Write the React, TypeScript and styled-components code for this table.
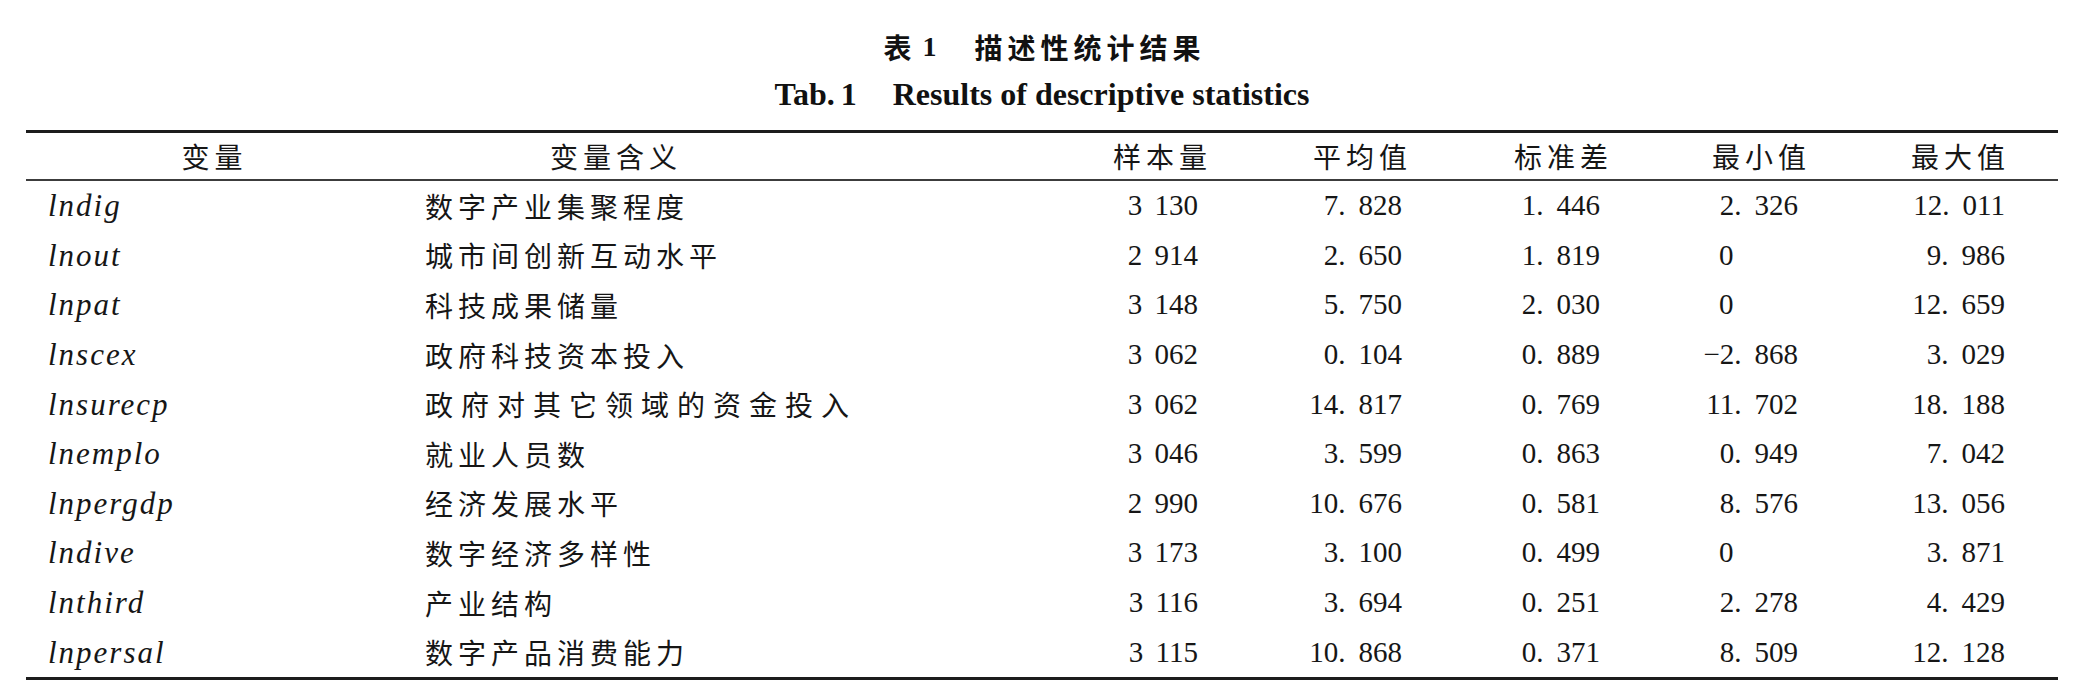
import styled, {createGlobalStyle} from 'styled-components';

interface StatRow {
    name: string;
    meaning: string;
    spacing?: number;
    values: string[];
}

const ROWS: StatRow[] = [
    {name: 'lndig', meaning: '数字产业集聚程度', values: ['3 130', '7.828', '1.446', '2.326', '12.011']},
    {name: 'lnout', meaning: '城市间创新互动水平', values: ['2 914', '2.650', '1.819', '0', '9.986']},
    {name: 'lnpat', meaning: '科技成果储量', values: ['3 148', '5.750', '2.030', '0', '12.659']},
    {name: 'lnscex', meaning: '政府科技资本投入', values: ['3 062', '0.104', '0.889', '−2.868', '3.029']},
    {name: 'lnsurecp', meaning: '政府对其它领域的资金投入', spacing: 8, values: ['3 062', '14.817', '0.769', '11.702', '18.188']},
    {name: 'lnemplo', meaning: '就业人员数', values: ['3 046', '3.599', '0.863', '0.949', '7.042']},
    {name: 'lnpergdp', meaning: '经济发展水平', values: ['2 990', '10.676', '0.581', '8.576', '13.056']},
    {name: 'lndive', meaning: '数字经济多样性', values: ['3 173', '3.100', '0.499', '0', '3.871']},
    {name: 'lnthird', meaning: '产业结构', values: ['3 116', '3.694', '0.251', '2.278', '4.429']},
    {name: 'lnpersal', meaning: '数字产品消费能力', values: ['3 115', '10.868', '0.371', '8.509', '12.128']},
];

const STAT_HEADS = ['样本量', '平均值', '标准差', '最小值', '最大值'];

const COLS = '372px 664px 196px 204px 198px 198px 200px';

// decimals are set with a wide point, as in the printed table
const renderNumber = (value: string) => {
    if (value === '0') return <Zero>0</Zero>;
    if (!value.includes('.')) return value;
    const [int, frac] = value.split('.');
    return (
        <>
            {int}
            <Dot>.</Dot>
            {frac}
        </>
    );
};

const App = () => {
    return (
        <>
            <GlobalStyle />
            <Page>
                <Caption>
                    <Title>
                        <span>表</span>
                        <TitleNo>1</TitleNo>
                        <span>描述性统计结果</span>
                    </Title>
                    <Subtitle>
                        <SubLabel>Tab. 1</SubLabel>
                        <span>Results of descriptive statistics</span>
                    </Subtitle>
                </Caption>

                <Table>
                    <HeadRow>
                        <HeadCell>变量</HeadCell>
                        <HeadCell $indent={152}>变量含义</HeadCell>
                        {STAT_HEADS.map((head) => (
                            <HeadCell key={head}>{head}</HeadCell>
                        ))}
                    </HeadRow>

                    {ROWS.map((row) => (
                        <BodyRow key={row.name}>
                            <VarCell>{row.name}</VarCell>
                            <MeaningCell $spacing={row.spacing ?? 5}>{row.meaning}</MeaningCell>
                            {row.values.map((value, i) => (
                                <NumCell key={i}>{renderNumber(value)}</NumCell>
                            ))}
                        </BodyRow>
                    ))}
                </Table>
            </Page>
        </>
    );
};

export default App;

const GlobalStyle = createGlobalStyle`
    html, body {
        margin: 0;
        padding: 0;
        background: #fff;
    }
    body {
        width: 2080px;
        height: 688px;
        overflow: hidden;
        color: #161616;
    }
`;

const Page = styled.div`
    width: 2080px;
    height: 688px;
    padding-top: 29px;
    box-sizing: border-box;
`;

const Caption = styled.header`
    display: flex;
    flex-direction: column;
    align-items: center;
    width: 2032px;
    margin-left: 26px;
`;

const Title = styled.h1`
    display: flex;
    align-items: center;
    height: 36px;
    margin: 0 -5px 0 0;
    font: 700 28px/36px 'Noto Sans CJK SC', sans-serif;
    letter-spacing: 5px;
    color: #111;
`;

const TitleNo = styled.span`
    margin: 0 38px 0 6px;
    font: 700 28px/36px 'Liberation Serif', serif;
    letter-spacing: 0;
`;

const Subtitle = styled.div`
    display: flex;
    align-items: center;
    height: 40px;
    margin-top: 9px;
    font: 700 32px/40px 'Liberation Serif', serif;
    color: #111;
`;

const SubLabel = styled.span`
    margin-right: 36px;
    word-spacing: -2px;
`;

const Table = styled.div`
    width: 2032px;
    margin: 16px 0 0 26px;
    border-top: 3px solid #1c1c1c;
    border-bottom: 3px solid #1c1c1c;
`;

const HeadRow = styled.div`
    display: grid;
    grid-template-columns: ${COLS};
    align-items: center;
    height: 46px;
    border-bottom: 2px solid #3c3c3c;
`;

const BodyRow = styled.div`
    display: grid;
    grid-template-columns: ${COLS};
    align-items: center;
    height: 49.6px;
`;

const HeadCell = styled.div<{$indent?: number}>`
    font: 400 28px/1 'Noto Sans CJK SC', sans-serif;
    letter-spacing: 5px;
    text-align: ${({$indent}) => ($indent ? 'left' : 'center')};
    padding-left: ${({$indent}) => $indent ?? 5}px;
    white-space: nowrap;
`;

const VarCell = styled.div`
    padding-left: 22px;
    font: italic 400 31px/1 'Liberation Serif', serif;
    letter-spacing: 2px;
`;

const MeaningCell = styled.div<{$spacing: number}>`
    padding-left: 27px;
    font: 400 28px/1 'Noto Sans CJK SC', sans-serif;
    letter-spacing: ${({$spacing}) => $spacing}px;
    white-space: nowrap;
`;

const NumCell = styled.div`
    padding-right: 60px;
    text-align: right;
    font: 400 29px/1 'Liberation Serif', serif;
    word-spacing: 5px;
    white-space: nowrap;

    &:last-child {
        padding-right: 53px;
    }
`;

const Dot = styled.span`
    margin-right: 13px;
`;

const Zero = styled.span`
    display: inline-block;
    width: 79px;
    text-align: left;
`;
